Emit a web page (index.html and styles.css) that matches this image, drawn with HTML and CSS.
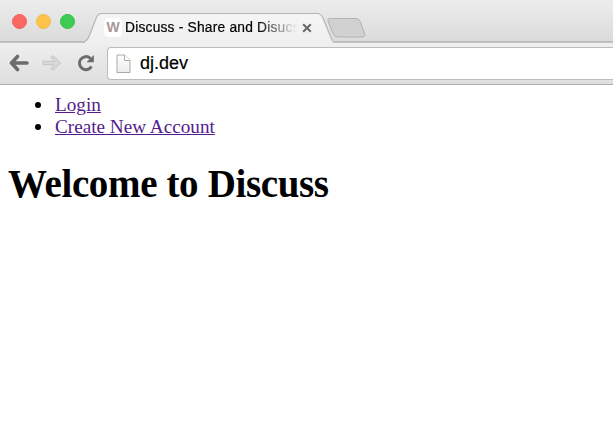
FILE: index.html
```html
<!DOCTYPE html>
<html lang="en">
<head>
<meta charset="utf-8">
<title>Discuss - Share and Disucss</title>
<link rel="stylesheet" href="styles.css">
</head>
<body>
<div class="browser">
  <header class="tabstrip">
    <div class="lights"><i class="light red"></i><i class="light yellow"></i><i class="light green"></i></div>
    <div class="tab">
      <svg class="tab-shape" width="248" height="31" viewBox="0 0 248 31">
        <defs><linearGradient id="t" x1="0" y1="0" x2="0" y2="1"><stop offset="0" stop-color="#f5f5f5"/><stop offset="1" stop-color="#efefef"/></linearGradient></defs>
        <path d="M0 31V29.500Q2.500 28.500 4 24.500L11 6.500Q13 1.500 17 1.500H232Q236 1.500 238 6L245.500 24.500Q247 28.500 248 29.500V31Z" fill="url(#t)"/>
        <path d="M-1 29.500Q2.500 28.500 4 24.500L11 6.500Q13 1.500 17 1.500H232Q236 1.500 238 6L245.500 24.500Q247 28.500 248 29.500" fill="none" stroke="#b5b5b5" stroke-width="1.200"/>
      </svg>
      <span class="favicon">W</span>
      <span class="tab-title">Discuss - Share and Disucss</span>
      <svg class="close" width="10" height="10" viewBox="0 0 10 10"><path d="M1.200 1.200l7.600 7.600M8.800 1.200l-7.600 7.600" stroke="#666" stroke-width="2"/></svg>
    </div>
    <svg class="new-tab" width="41" height="22" viewBox="0 0 41 22"><path d="M4.500 1.500H30Q33 1.500 34.500 5L38.500 16Q40 20 36 20H12Q8.500 20 7 16.500L2 4Q1 1.500 4.500 1.500Z" fill="#d1d1d1" stroke="#b2b2b2"/></svg>
  </header>
  <nav class="toolbar">
    <svg class="back" width="20" height="18" viewBox="0 0 20 18"><path d="M8.500 2.500L2.500 9L8.500 15.500M3 9H18" fill="none" stroke="#6b6b6b" stroke-width="3.600" stroke-linejoin="round" stroke-linecap="round"/></svg>
    <svg class="forward" width="20" height="18" viewBox="0 0 20 18"><path d="M11 1.500L18.500 9L11 16.500L9 14.500L12.500 10.700H1V7.300H12.500L9 3.500Z" fill="#d9d9d9" stroke="#c4c4c4" stroke-width="1" stroke-linejoin="round"/></svg>
    <svg class="reload" width="18" height="18" viewBox="0 0 18 18"><path d="M14.500 12.500A6.500 6.500 0 1 1 13.300 4.300" fill="none" stroke="#6b6b6b" stroke-width="3"/><path d="M16.800 1V8.300H9.500Z" fill="#6b6b6b"/></svg>
    <div class="omnibox">
      <svg width="15" height="20" viewBox="0 0 15 20"><defs><linearGradient id="p" x1="0" y1="0" x2="0" y2="1"><stop offset="0" stop-color="#fff"/><stop offset="1" stop-color="#ececec"/></linearGradient></defs><path d="M1 1H8.500L14 6.500V18.500H1Z" fill="url(#p)" stroke="#aaa"/><path d="M8.500 1V6.500H14" fill="#fff" stroke="#aaa"/></svg>
      <span>dj.dev</span>
    </div>
  </nav>
</div>
<main>
  <ul>
    <li><a href="#">Login</a></li>
    <li><a href="#">Create New Account</a></li>
  </ul>
  <h1>Welcome to Discuss</h1>
</main>
</body>
</html>
```
FILE: styles.css
```css
body {
  margin: 0;
  background: #fff;
  color: #000;
  font-family: "Liberation Serif", serif;
  overflow: hidden;
}
.browser {
  height: 85px;
  font-family: "Liberation Sans", sans-serif;
}
.tabstrip {
  box-sizing: border-box;
  height: 43px;
  display: flex;
  align-items: flex-start;
  background: linear-gradient(#ededed, #dadada);
  box-shadow: inset 0 -1px #c4c4c4, inset 0 -2px #b9b9b9;
}
.lights {
  display: flex;
  gap: 9px;
  width: 73px;
  padding: 14px 0 0 12px;
}
.light {
  box-sizing: border-box;
  width: 15px;
  height: 15px;
  border-radius: 50%;
}
.red { background: #fc6663; border: 1px solid #f2605d; }
.yellow { background: #fdc349; border: 1px solid #efba49; }
.green { background: #3dcb53; border: 1px solid #35bf4a; }
.tab {
  position: relative;
  box-sizing: border-box;
  width: 248px;
  height: 31px;
  margin-top: 12px;
  padding-left: 19px;
  display: flex;
  align-items: center;
  flex: none;
}
.tab-shape {
  position: absolute;
  left: 0;
  top: 0;
}
.favicon {
  position: relative;
  width: 18px;
  height: 19px;
  border-radius: 5px;
  background: #fff;
  color: #ab9797;
  font: bold 14px/19px "Liberation Sans", sans-serif;
  text-align: center;
}
.tab-title {
  position: relative;
  width: 172px;
  margin-left: 3px;
  overflow: hidden;
  white-space: nowrap;
  font-size: 13.800px;
  letter-spacing: .2px;
  line-height: 20px;
  -webkit-text-stroke: .2px #000;
  -webkit-mask-image: linear-gradient(to right, #000 132px, transparent 172px);
  mask-image: linear-gradient(to right, #000 132px, transparent 172px);
}
.close {
  position: relative;
  margin-left: 5px;
}
.new-tab {
  margin: 17px 0 0 -7px;
  position: relative;
}
.toolbar {
  box-sizing: border-box;
  height: 42px;
  display: flex;
  align-items: center;
  padding-left: 9px;
  background: linear-gradient(#efefef, #dedede);
  border-bottom: 1px solid #acacac;
}
.back, .forward, .reload { margin-bottom: 2px; }
.forward { margin-left: 13px; }
.reload { margin-left: 15px; }
.omnibox {
  box-sizing: border-box;
  flex: 1;
  height: 33px;
  margin-left: 12px;
  padding-left: 8px;
  display: flex;
  align-items: center;
  gap: 9px;
  background: #fff;
  border: 1px solid #bcbcbc;
  border-right: 0;
  border-radius: 4px 0 0 4px;
  font-size: 18px;
  -webkit-text-stroke: .2px #000;
}
main { padding: 9px 8px 0; }
ul {
  margin: 0;
  padding-left: 47px;
  font-size: 19.200px;
  line-height: 21.500px;
  list-style: none;
}
li::before {
  content: "";
  display: inline-block;
  width: 6px;
  height: 6px;
  margin: 0 14px 3px -20px;
  border-radius: 50%;
  background: #000;
}
a {
  color: #551a8b;
  text-decoration: underline;
}
h1 {
  margin: 24px 0 0;
  font-size: 39px;
  line-height: 46px;
  letter-spacing: -.36px;
}
```
